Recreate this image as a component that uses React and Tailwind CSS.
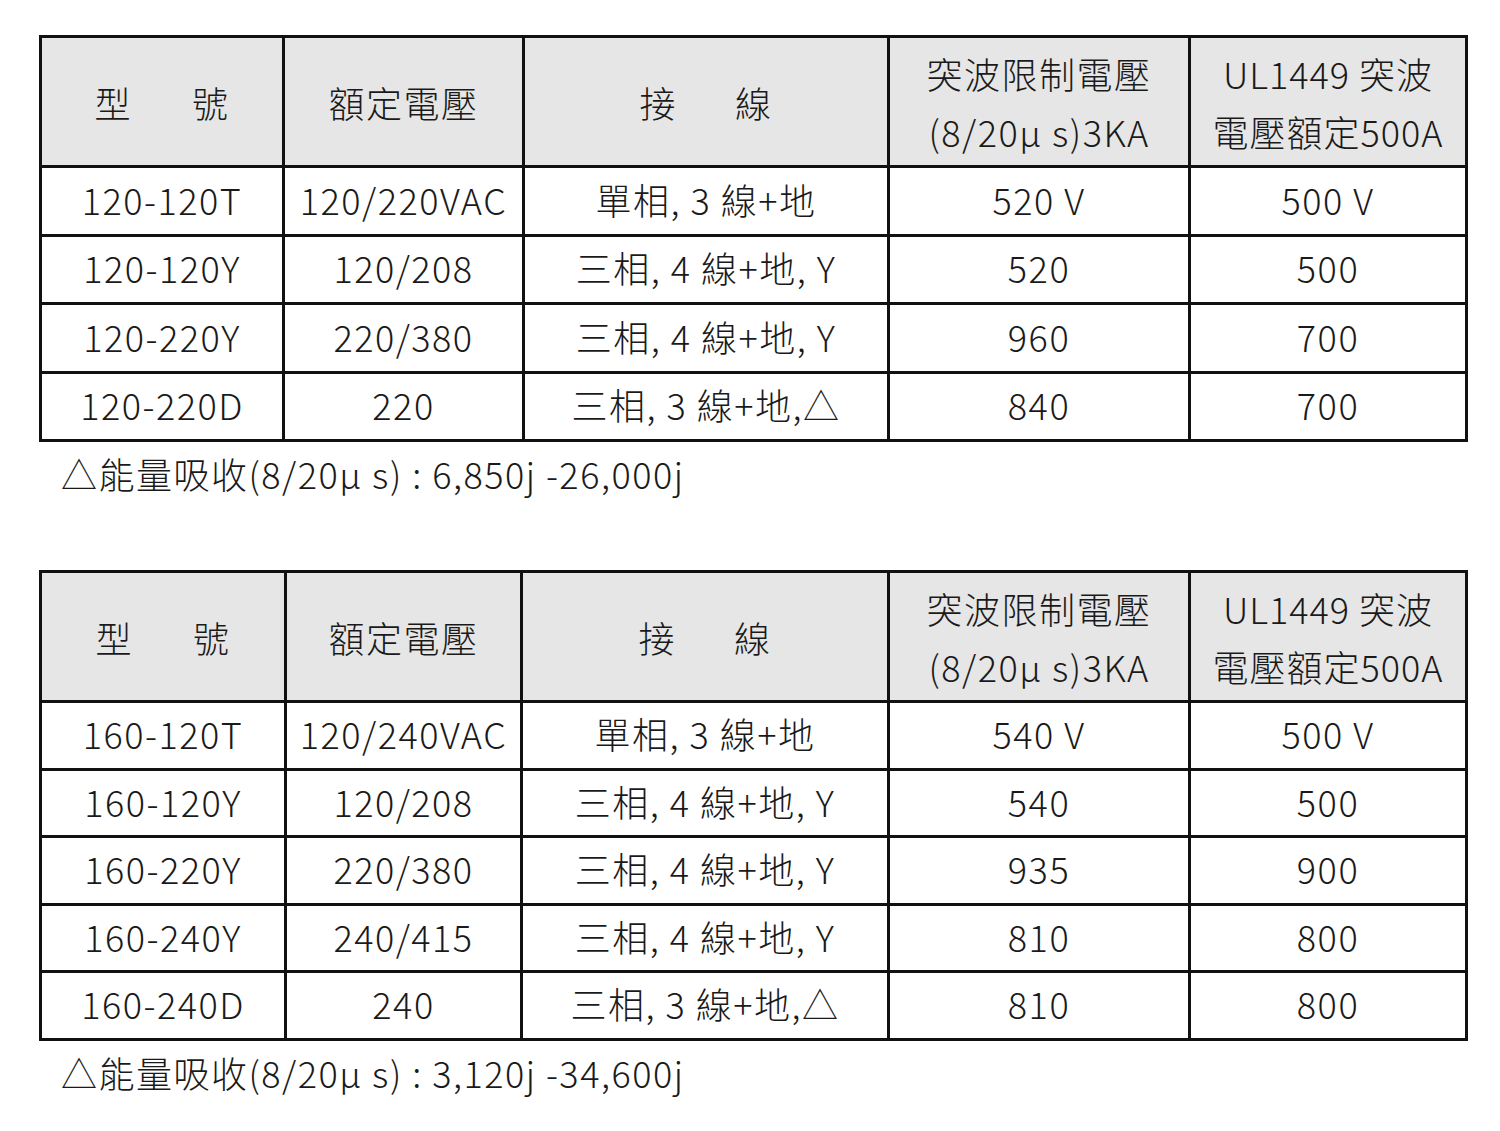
const font = { fontFamily: '"Noto Sans CJK TC", "Noto Sans", sans-serif' }

const table1 = {
  cols: [243, 240, 365, 301, 277],
  rowH: 68.5,
  rows: [
    ['120-120T', '120/220VAC', '單相, 3 線+地', '520 V', '500 V'],
    ['120-120Y', '120/208', '三相, 4 線+地, Y', '520', '500'],
    ['120-220Y', '220/380', '三相, 4 線+地, Y', '960', '700'],
    ['120-220D', '220', '三相, 3 線+地,△', '840', '700'],
  ],
  note: '△能量吸收(8/20μ s) : 6,850j -26,000j',
}

const table2 = {
  cols: [245, 236, 367, 301, 277],
  rowH: 67.5,
  rows: [
    ['160-120T', '120/240VAC', '單相, 3 線+地', '540 V', '500 V'],
    ['160-120Y', '120/208', '三相, 4 線+地, Y', '540', '500'],
    ['160-220Y', '220/380', '三相, 4 線+地, Y', '935', '900'],
    ['160-240Y', '240/415', '三相, 4 線+地, Y', '810', '800'],
    ['160-240D', '240', '三相, 3 線+地,△', '810', '800'],
  ],
  note: '△能量吸收(8/20μ s) : 3,120j -34,600j',
}

function SpecTable({ data }) {
  return (
    <div>
      <table className="table-fixed border-collapse border-[3px] border-[#111] text-[36px] tracking-[1.5px] text-[#1a1a1a]" style={{ width: 1428 }}>
        <colgroup>
          {data.cols.map((w, i) => <col key={i} style={{ width: w }} />)}
        </colgroup>
        <thead>
          <tr className="h-[130px] bg-[#e6e6e6]">
            <th className="border-[3px] border-[#111] font-light">
              <div className="flex justify-center gap-[60px]"><span>型</span><span>號</span></div>
            </th>
            <th className="border-[3px] border-[#111] font-light">額定電壓</th>
            <th className="border-[3px] border-[#111] font-light">
              <div className="flex justify-center gap-[58px]"><span>接</span><span>線</span></div>
            </th>
            <th className="border-[3px] border-[#111] font-light leading-[58px]">
              <div>突波限制電壓</div>
              <div>(8/20μ s)3KA</div>
            </th>
            <th className="border-[3px] border-[#111] font-light leading-[58px] whitespace-nowrap tracking-[1px]">
              <div>UL1449 突波</div>
              <div>電壓額定500A</div>
            </th>
          </tr>
        </thead>
        <tbody>
          {data.rows.map((r, i) => (
            <tr key={i} style={{ height: data.rowH }}>
              {r.map((c, j) => (
                <td key={j} className="border-[3px] border-[#111] pb-[4px] text-center font-light whitespace-nowrap">{c}</td>
              ))}
            </tr>
          ))}
        </tbody>
      </table>
      <div className="pl-[22px] pt-[6px] text-[36px] font-light leading-[50px] tracking-[1.5px] text-[#1a1a1a]">{data.note}</div>
    </div>
  )
}

export default function App() {
  return (
    <div className="min-h-[1131px] w-[1500px] bg-white pl-[39px] pt-[35px]" style={font}>
      <SpecTable data={table1} />
      <div className="h-[72px]" />
      <SpecTable data={table2} />
    </div>
  )
}
